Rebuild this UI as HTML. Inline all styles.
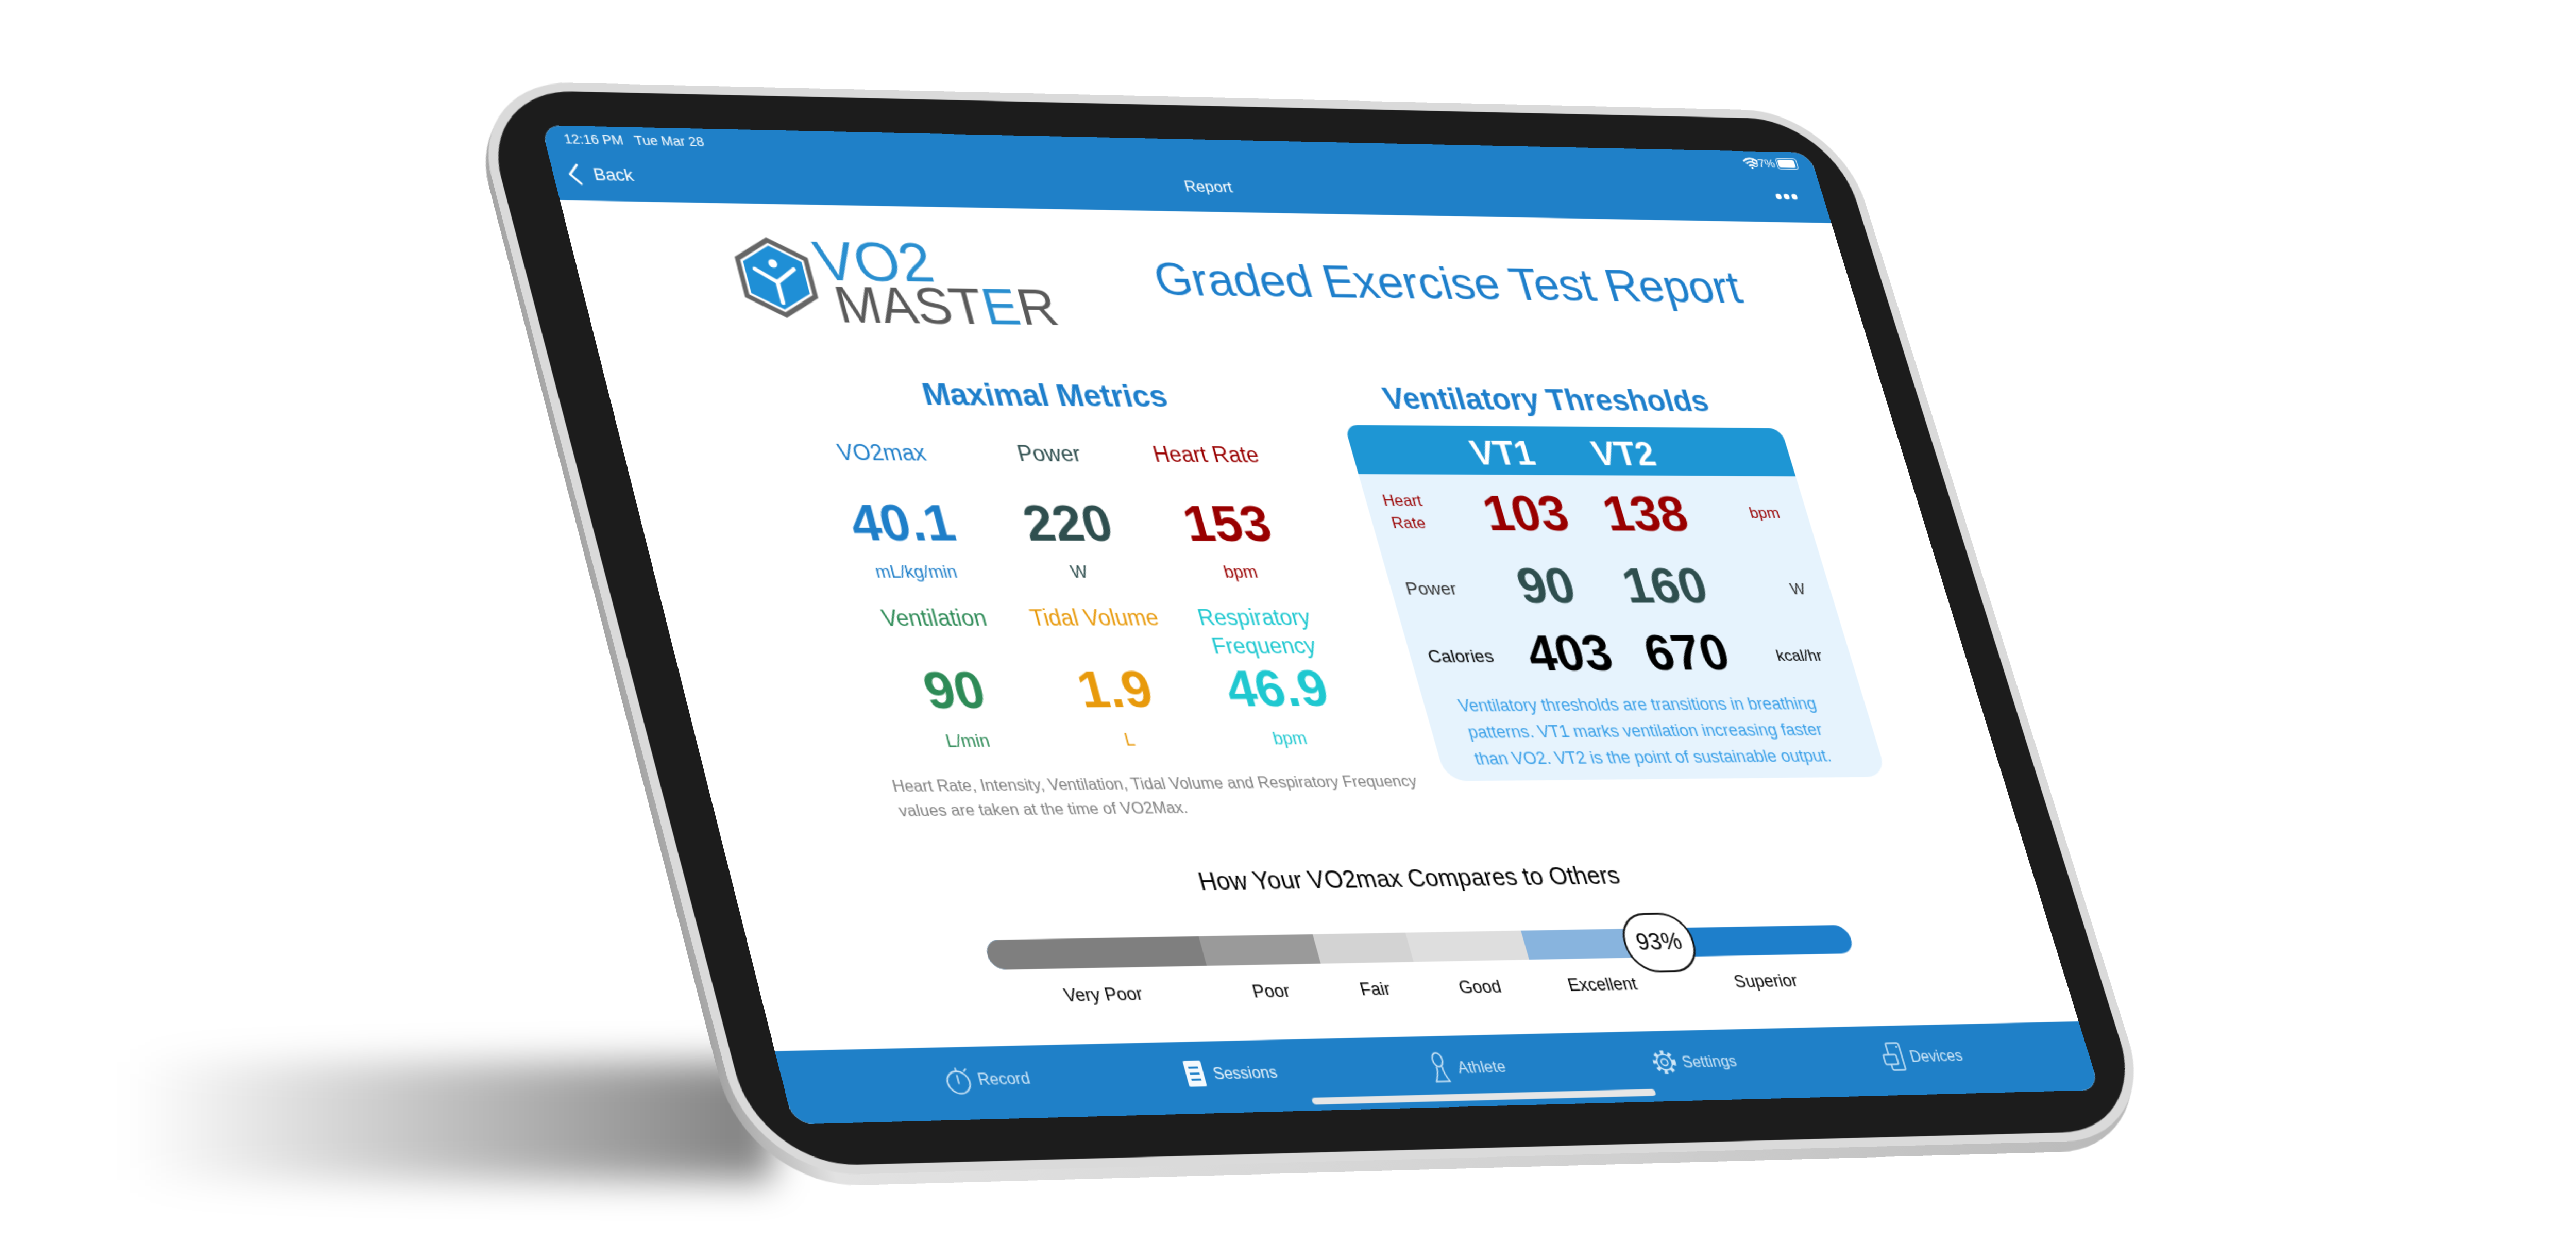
<!DOCTYPE html>
<html><head><meta charset="utf-8">
<style>
html,body{margin:0;padding:0;background:#fff;}
body{width:5120px;height:2441px;position:relative;overflow:hidden;font-family:"Liberation Sans",Arial,sans-serif;}
.q{position:absolute;left:0;top:0;transform-origin:0 0;}
#scr{width:1366px;height:1024px;background:#fff;border-radius:20px;overflow:hidden;}
#scr div{position:absolute;white-space:nowrap;}
.c{text-align:center;width:300px;}
.b{font-weight:bold;}
.num{font-size:54px;line-height:54px;font-weight:bold;}
</style></head><body>

<div style="position:absolute;left:250px;top:2060px;width:1250px;height:230px;background:linear-gradient(90deg,rgba(0,0,0,0),rgba(0,0,0,0.25) 50%,rgba(0,0,0,0.5));filter:blur(35px);"></div>

<div id="side" class="q" style="width:1540px;height:1200px;border-radius:115px;background:linear-gradient(90deg,#a5a5a5,#e2e2e2 6%,#d0d0d0 60%,#b8b8b8);"></div>
<div id="frame" class="q" style="width:1540px;height:1200px;border-radius:110px;background:#1c1c1c;box-sizing:border-box;border:10px solid #dadada;"></div>

<div id="scr" class="q">
  <div style="left:0;top:0;width:1366px;height:80px;background:#1f80c8;"></div>
  <div style="left:20px;top:7px;font-size:14px;line-height:14px;color:#fff;">12:16 PM&nbsp;&nbsp;&nbsp;Tue Mar 28</div>
  <svg style="position:absolute;left:1286px;top:7px" width="18" height="13" viewBox="0 0 18 13"><path d="M1 4.5 Q9 -2 17 4.5 M3.5 7.3 Q9 2.5 14.5 7.3 M6 10 Q9 7.5 12 10" stroke="#fff" stroke-width="1.8" fill="none"/><circle cx="9" cy="12" r="1.2" fill="#fff"/></svg>
  <div style="left:1296px;top:7px;width:26px;text-align:right;font-size:13px;line-height:14px;color:#fff;">97%</div>
  <div style="left:1324px;top:7px;width:22px;height:11px;border:1px solid #cfe6f7;border-radius:3px;"></div>
  <div style="left:1326px;top:9px;width:19px;height:9px;background:#fff;border-radius:2px;"></div>
  <svg style="position:absolute;left:14px;top:40px" width="14" height="24" viewBox="0 0 14 24"><path d="M12 2 L3 12 L12 22" stroke="#fff" stroke-width="2.6" fill="none" stroke-linecap="round" stroke-linejoin="round"/></svg>
  <div style="left:41px;top:43px;font-size:18px;line-height:18px;color:#fff;">Back</div>
  <div class="c" style="left:533px;top:44px;font-size:17px;line-height:17px;color:#fff;">Report</div>
  <svg style="position:absolute;left:1311px;top:46px" width="26" height="10"><circle cx="4" cy="5" r="3.2" fill="#fff"/><circle cx="13" cy="5" r="3.2" fill="#fff"/><circle cx="22" cy="5" r="3.2" fill="#fff"/></svg>

  <svg style="position:absolute;left:161px;top:116px" width="80" height="86" viewBox="0 0 80 86">
    <polygon points="40,3 75,23 75,63 40,83 5,63 5,23" fill="none" stroke="#666" stroke-width="5"/>
    <polygon points="40,9 70,26 70,60 40,77 10,60 10,26" fill="#1f8fd6"/>
    <circle cx="40" cy="28" r="4.5" fill="#fff"/>
    <path d="M20 34 L40 48 L60 34" stroke="#fff" stroke-width="4.5" fill="none" stroke-linecap="round"/>
    <path d="M40 47 L40 70" stroke="#fff" stroke-width="4.5" stroke-linecap="round"/>
  </svg>
  <div style="left:246px;top:111px;font-size:60px;line-height:60px;color:#2a8fd0;">VO2</div>
  <div style="left:255px;top:160px;font-size:55px;line-height:55px;color:#5a5a5a;">MAST<span style="color:#2a8fd0">E</span>R</div>
  <div style="left:598px;top:130px;font-size:50px;line-height:50px;color:#1e7fcb;">Graded Exercise Test Report</div>

  <div class="c b" style="left:298px;top:265px;font-size:33px;line-height:33px;color:#1e7fcb;">Maximal Metrics</div>
  <div class="c" style="left:112px;top:333px;font-size:23px;line-height:23px;color:#1f7fc9;">VO2max</div>
  <div class="c" style="left:285px;top:333px;font-size:23px;line-height:23px;color:#2f4f4f;">Power</div>
  <div class="c" style="left:450px;top:333px;font-size:23px;line-height:23px;color:#990000;">Heart Rate</div>
  <div class="c num" style="left:114px;top:391px;color:#1f7fc9;">40.1</div>
  <div class="c num" style="left:285px;top:391px;color:#2f4f4f;">220</div>
  <div class="c num" style="left:452px;top:391px;color:#990000;">153</div>
  <div class="c" style="left:115px;top:460px;font-size:18px;line-height:18px;color:#1f7fc9;">mL/kg/min</div>
  <div class="c" style="left:283px;top:460px;font-size:18px;line-height:18px;color:#2f4f4f;">W</div>
  <div class="c" style="left:452px;top:460px;font-size:18px;line-height:18px;color:#990000;">bpm</div>
  <div class="c" style="left:121px;top:506px;font-size:23px;line-height:23px;color:#2e8b57;">Ventilation</div>
  <div class="c" style="left:286px;top:506px;font-size:23px;line-height:23px;color:#e89a0c;">Tidal Volume</div>
  <div class="c" style="left:453px;top:506px;font-size:23px;line-height:23px;color:#1fc8d0;">Respiratory</div>
  <div class="c" style="left:455px;top:536px;font-size:23px;line-height:23px;color:#1fc8d0;">Frequency</div>
  <div class="c num" style="left:122px;top:565px;color:#2e8b57;">90</div>
  <div class="c num" style="left:287px;top:565px;color:#e89a0c;">1.9</div>
  <div class="c num" style="left:456px;top:565px;color:#1fc8d0;">46.9</div>
  <div class="c" style="left:122px;top:635px;font-size:18px;line-height:18px;color:#2e8b57;">L/min</div>
  <div class="c" style="left:288px;top:635px;font-size:18px;line-height:18px;color:#e89a0c;">L</div>
  <div class="c" style="left:455px;top:635px;font-size:18px;line-height:18px;color:#1fc8d0;">bpm</div>
  <div style="left:184px;top:678px;font-size:16.5px;line-height:25px;color:#808080;">Heart Rate, Intensity, Ventilation, Tidal Volume and Respiratory Frequency<br>values are taken at the time of VO2Max.</div>

  <div class="b" style="left:808px;top:265px;font-size:33px;line-height:33px;color:#1e7fcb;">Ventilatory Thresholds</div>
  <div style="left:757px;top:311px;width:480px;height:54px;background:#1e96d4;border-radius:14px 14px 0 0;"></div>
  <div style="left:757px;top:364px;width:480px;height:326px;background:#e6f3fd;border-radius:0 0 22px 22px;"></div>
  <div class="c b" style="left:770px;top:322px;font-size:37px;line-height:37px;color:#fff;">VT1</div>
  <div class="c b" style="left:903px;top:322px;font-size:37px;line-height:37px;color:#fff;">VT2</div>
  <div style="left:760px;top:381px;width:72px;text-align:center;font-size:17px;line-height:24px;color:#990000;">Heart<br>Rate</div>
  <div class="c num" style="left:776px;top:379px;color:#990000;">103</div>
  <div class="c num" style="left:907px;top:379px;color:#990000;">138</div>
  <div style="left:1173px;top:396px;font-size:17px;line-height:17px;color:#990000;">bpm</div>
  <div style="left:773px;top:478px;font-size:19px;line-height:19px;color:#333;">Power</div>
  <div class="c num" style="left:775px;top:457px;color:#2f4f4f;">90</div>
  <div class="c num" style="left:905px;top:457px;color:#2f4f4f;">160</div>
  <div style="left:1193px;top:479px;font-size:17px;line-height:17px;color:#333;">W</div>
  <div style="left:776px;top:550px;font-size:19px;line-height:19px;color:#000;">Calories</div>
  <div class="c num" style="left:779px;top:529px;color:#000;">403</div>
  <div class="c num" style="left:907px;top:529px;color:#000;">670</div>
  <div style="left:1155px;top:551px;font-size:17px;line-height:17px;color:#000;">kcal/hr</div>
  <div style="left:758px;top:597px;width:460px;text-align:center;font-size:18px;line-height:28px;color:#3aa0e8;">Ventilatory thresholds are transitions in breathing<br>patterns. VT1 marks ventilation increasing faster<br>than VO2. VT2 is the point of sustainable output.</div>

  <div style="left:391px;top:779px;width:600px;text-align:center;font-size:25px;line-height:25px;color:#000;">How Your VO2max Compares to Others</div>
  <div style="left:235px;top:846px;width:908px;height:30px;border-radius:15px;overflow:hidden;background:#1e7fcb;">
    <div style="left:0;top:0;width:219px;height:30px;background:#7f7f7f;"></div>
    <div style="left:219px;top:0;width:118px;height:30px;background:#9a9a9a;"></div>
    <div style="left:337px;top:0;width:97px;height:30px;background:#d3d3d3;"></div>
    <div style="left:434px;top:0;width:122px;height:30px;background:#dedede;"></div>
    <div style="left:556px;top:0;width:144px;height:30px;background:#88b4de;"></div>
  </div>
  <div style="left:897px;top:830px;width:71px;height:58px;border:2.5px solid #111;border-radius:30px;background:#fff;text-align:center;font-size:24px;line-height:58px;color:#000;">93%</div>
  <div class="c" style="left:191px;top:894px;font-size:18px;line-height:18px;">Very Poor</div>
  <div class="c" style="left:363px;top:894px;font-size:18px;line-height:18px;">Poor</div>
  <div class="c" style="left:471px;top:894px;font-size:18px;line-height:18px;">Fair</div>
  <div class="c" style="left:581px;top:894px;font-size:18px;line-height:18px;">Good</div>
  <div class="c" style="left:711px;top:894px;font-size:18px;line-height:18px;">Excellent</div>
  <div class="c" style="left:887px;top:894px;font-size:18px;line-height:18px;">Superior</div>

  <div style="left:0;top:952px;width:1366px;height:72px;background:#1f80c8;"></div>
  <svg style="position:absolute;left:160px;top:970px" width="26" height="30" viewBox="0 0 26 30"><circle cx="13" cy="17" r="11" stroke="#cfe6f7" stroke-width="1.5" fill="none"/><path d="M13 3 V6 M21 6 l2 -2 M13 10 V18" stroke="#cfe6f7" stroke-width="1.5" stroke-linecap="round"/></svg>
  <div style="left:193px;top:978px;font-size:16px;line-height:16px;color:#cfe6f7;">Record</div>
  <svg style="position:absolute;left:402px;top:970px" width="20" height="28" viewBox="0 0 20 28"><rect x="1" y="1" width="18" height="26" rx="1.5" fill="#f4f9fd"/><path d="M5 8 H15 M5 14 H15 M5 20 H15" stroke="#1f80c8" stroke-width="2.2"/></svg>
  <div style="left:431px;top:978px;font-size:16px;line-height:16px;color:#eaf4fb;">Sessions</div>
  <svg style="position:absolute;left:654px;top:968px" width="22" height="32" viewBox="0 0 22 32"><ellipse cx="11" cy="8" rx="5" ry="7" stroke="#cfe6f7" stroke-width="1.5" fill="none"/><path d="M8 15 Q9 20 4 30 H18 Q13 20 14 15" stroke="#cfe6f7" stroke-width="1.5" fill="none"/></svg>
  <div style="left:684px;top:978px;font-size:16px;line-height:16px;color:#cfe6f7;">Athlete</div>
  <svg style="position:absolute;left:888px;top:968px" width="30" height="32" viewBox="0 0 30 32"><circle cx="15" cy="16" r="10" stroke="#cfe6f7" stroke-width="4" stroke-dasharray="3.5 4" fill="none"/><circle cx="15" cy="16" r="8" stroke="#cfe6f7" stroke-width="1.4" fill="none"/><circle cx="15" cy="16" r="3.5" stroke="#cfe6f7" stroke-width="1.4" fill="none"/></svg>
  <div style="left:922px;top:978px;font-size:16px;line-height:16px;color:#cfe6f7;">Settings</div>
  <svg style="position:absolute;left:1138px;top:968px" width="26" height="32" viewBox="0 0 26 32"><rect x="8" y="2" width="14" height="28" rx="1.5" stroke="#cfe6f7" stroke-width="1.5" fill="none"/><rect x="2" y="14" width="14" height="10" rx="1.5" stroke="#cfe6f7" stroke-width="1.5" fill="#1f80c8"/><circle cx="19" cy="6" r="1" fill="#cfe6f7"/></svg>
  <div style="left:1169px;top:978px;font-size:16px;line-height:16px;color:#cfe6f7;">Devices</div>
  <div style="left:524px;top:1011px;width:360px;height:7px;border-radius:4px;background:#e6e6e6;"></div>
</div>

<script>
function fit(id,w,h,p){
  var el=document.getElementById(id);
  var x0=p[0][0],y0=p[0][1],x1=p[1][0],y1=p[1][1],x2=p[2][0],y2=p[2][1],x3=p[3][0],y3=p[3][1];
  var dx1=x1-x2,dx2=x3-x2,dx3=x0-x1+x2-x3,dy1=y1-y2,dy2=y3-y2,dy3=y0-y1+y2-y3;
  var den=dx1*dy2-dx2*dy1;
  var g=(dx3*dy2-dx2*dy3)/den, hh=(dx1*dy3-dx3*dy1)/den;
  var a=x1-x0+g*x1, b=x3-x0+hh*x3, c=x0;
  var d=y1-y0+g*y1, e=y3-y0+hh*y3, f=y0;
  a/=w;d/=w;g/=w;b/=h;e/=h;hh/=h;
  el.style.transform='matrix3d('+[a,d,0,g,b,e,0,hh,0,0,1,0,c,f,0,1].join(',')+')';
}
fit('side',1540,1200,[[898,164],[3562,224],[4190,2230],[1452,2306]]);
fit('frame',1540,1200,[[905,156],[3565,217],[4192,2210],[1462,2284]]);
fit('scr',1366,1024,[[1050,243],[3512,296],[4076,2115],[1540,2182]]);
</script>
</body></html>
